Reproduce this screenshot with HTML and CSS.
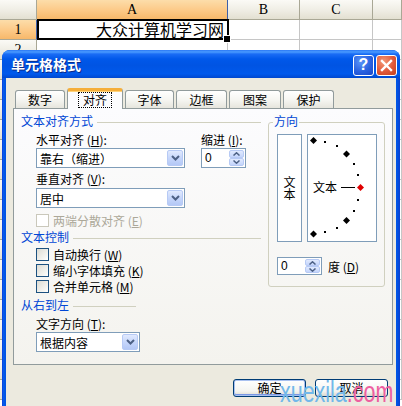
FILE: index.html
```html
<!DOCTYPE html>
<html>
<head>
<meta charset="utf-8">
<link rel="stylesheet" href="styles.css">
</head>
<body>
<div class="sheet">
  <div class="hrow">
    <div class="hd c0"></div>
    <div class="hd ca on">A</div>
    <div class="hd cb">B</div>
    <div class="hd cc">C</div>
    <div class="hd cd"></div>
  </div>
  <div class="row">
    <div class="hd c0 on">1</div>
    <div class="cell ca a1">大众计算机学习网</div>
    <div class="cell cb"></div>
    <div class="cell cc"></div>
    <div class="cell cd"></div>
  </div>
  <div class="row"><div class="hd c0">2</div><div class="cell ca"></div><div class="cell cb"></div><div class="cell cc"></div><div class="cell cd"></div></div>
  <div class="row"><div class="hd c0"></div><div class="cell ca"></div><div class="cell cb"></div><div class="cell cc"></div><div class="cell cd"></div></div>
  <div class="row"><div class="hd c0"></div><div class="cell ca"></div><div class="cell cb"></div><div class="cell cc"></div><div class="cell cd"></div></div>
  <div class="row"><div class="hd c0"></div><div class="cell ca"></div><div class="cell cb"></div><div class="cell cc"></div><div class="cell cd"></div></div>
  <div class="row"><div class="hd c0"></div><div class="cell ca"></div><div class="cell cb"></div><div class="cell cc"></div><div class="cell cd"></div></div>
  <div class="row"><div class="hd c0"></div><div class="cell ca"></div><div class="cell cb"></div><div class="cell cc"></div><div class="cell cd"></div></div>
  <div class="row"><div class="hd c0"></div><div class="cell ca"></div><div class="cell cb"></div><div class="cell cc"></div><div class="cell cd"></div></div>
  <div class="row"><div class="hd c0"></div><div class="cell ca"></div><div class="cell cb"></div><div class="cell cc"></div><div class="cell cd"></div></div>
  <div class="row"><div class="hd c0"></div><div class="cell ca"></div><div class="cell cb"></div><div class="cell cc"></div><div class="cell cd"></div></div>
  <div class="row"><div class="hd c0"></div><div class="cell ca"></div><div class="cell cb"></div><div class="cell cc"></div><div class="cell cd"></div></div>
  <div class="row"><div class="hd c0"></div><div class="cell ca"></div><div class="cell cb"></div><div class="cell cc"></div><div class="cell cd"></div></div>
  <div class="row"><div class="hd c0"></div><div class="cell ca"></div><div class="cell cb"></div><div class="cell cc"></div><div class="cell cd"></div></div>
  <div class="row"><div class="hd c0"></div><div class="cell ca"></div><div class="cell cb"></div><div class="cell cc"></div><div class="cell cd"></div></div>
  <div class="row"><div class="hd c0"></div><div class="cell ca"></div><div class="cell cb"></div><div class="cell cc"></div><div class="cell cd"></div></div>
  <div class="row"><div class="hd c0"></div><div class="cell ca"></div><div class="cell cb"></div><div class="cell cc"></div><div class="cell cd"></div></div>
  <div class="row"><div class="hd c0"></div><div class="cell ca"></div><div class="cell cb"></div><div class="cell cc"></div><div class="cell cd"></div></div>
  <div class="row"><div class="hd c0"></div><div class="cell ca"></div><div class="cell cb"></div><div class="cell cc"></div><div class="cell cd"></div></div>
  <div class="row"><div class="hd c0"></div><div class="cell ca"></div><div class="cell cb"></div><div class="cell cc"></div><div class="cell cd"></div></div>
</div>

<div class="dialog">
  <div class="titlebar">
    <span class="title">单元格格式</span>
    <div class="tbtn help">?</div>
    <div class="tbtn close">
      <svg width="13" height="13" viewBox="0 0 13 13"><path d="M2 2 L11 11 M11 2 L2 11" stroke="#fff" stroke-width="2.4" stroke-linecap="square"/></svg>
    </div>
  </div>
  <div class="body">
    <div class="tabs">
      <div class="tab w50">数字</div>
      <div class="tab active"><span class="focus">对齐</span></div>
      <div class="tab w49">字体</div>
      <div class="tab w51">边框</div>
      <div class="tab w52">图案</div>
      <div class="tab w51">保护</div>
    </div>
    <div class="panel">
      <div class="left">
        <div class="legend l1"><span>文本对齐方式</span><i class="rule"></i></div>
        <div class="lblrow">
          <div class="lbl lw">水平对齐 (<u>H</u>):</div>
          <div class="lbl">缩进 (<u>I</u>):</div>
        </div>
        <div class="ctlrow">
          <div class="select sw1"><span>靠右（缩进）</span>
            <b class="drop"><svg width="9" height="6" viewBox="0 0 9 6"><path d="M1 1 L4.5 4.5 L8 1" fill="none" stroke="#4D6185" stroke-width="2"/></svg></b>
          </div>
          <div class="spin sp1"><span>0</span>
            <b class="spinbtn">
              <i><svg width="7" height="4" viewBox="0 0 7 4"><path d="M0.5 3.5 L3.5 0.8 L6.5 3.5" fill="none" stroke="#4D6185" stroke-width="1.5"/></svg></i>
              <i><svg width="7" height="4" viewBox="0 0 7 4"><path d="M0.5 0.5 L3.5 3.2 L6.5 0.5" fill="none" stroke="#4D6185" stroke-width="1.5"/></svg></i>
            </b>
          </div>
        </div>
        <div class="lbl ind l2">垂直对齐 (<u>V</u>):</div>
        <div class="ctlrow c2">
          <div class="select sw1"><span>居中</span>
            <b class="drop"><svg width="9" height="6" viewBox="0 0 9 6"><path d="M1 1 L4.5 4.5 L8 1" fill="none" stroke="#4D6185" stroke-width="2"/></svg></b>
          </div>
        </div>
        <div class="cbrow dis d1"><i class="box"></i><span>两端分散对齐 (<u>E</u>)</span></div>
        <div class="legend l3"><span>文本控制</span><i class="rule"></i></div>
        <div class="cbrow c1"><i class="box"></i><span>自动换行 (<u>W</u>)</span></div>
        <div class="cbrow"><i class="box"></i><span>缩小字体填充 (<u>K</u>)</span></div>
        <div class="cbrow"><i class="box"></i><span>合并单元格 (<u>M</u>)</span></div>
        <div class="legend l4"><span>从右到左</span><i class="rule short"></i></div>
        <div class="lbl ind l5">文字方向 (<u>T</u>):</div>
        <div class="ctlrow c2">
          <div class="select sw3"><span>根据内容</span>
            <b class="drop"><svg width="9" height="6" viewBox="0 0 9 6"><path d="M1 1 L4.5 4.5 L8 1" fill="none" stroke="#4D6185" stroke-width="2"/></svg></b>
          </div>
        </div>
      </div>
      <div class="group">
        <span class="gl">方向</span>
        <div class="orient">
          <div class="vbox"><span>文</span><span>本</span></div>
          <div class="dial">
            <svg class="dialsvg" width="68" height="106" viewBox="0 0 68 106">
              <g fill="#000">
                <path d="M5.5 2 L9 5.5 L5.5 9 L2 5.5Z"/>
                <rect x="16" y="6" width="2" height="2"/>
                <rect x="28" y="10" width="2" height="2"/>
                <path d="M38.5 15.5 L42 19 L38.5 22.5 L35 19Z"/>
                <rect x="45" y="28" width="2" height="2"/>
                <rect x="49" y="39" width="2" height="2"/>
                <rect x="49" y="64" width="2" height="2"/>
                <rect x="45" y="75" width="2" height="2"/>
                <path d="M38.5 82 L42 85.5 L38.5 89 L35 85.5Z"/>
                <rect x="28" y="92" width="2" height="2"/>
                <rect x="16" y="96" width="2" height="2"/>
                <path d="M5.5 95.5 L9 99 L5.5 102.5 L2 99Z"/>
              </g>
              <path d="M52.5 49 L56 52.5 L52.5 56 L49 52.5Z" fill="#E00000"/>
              <rect x="33" y="52" width="14" height="1" fill="#000"/>
            </svg>
            <span class="dtext">文本</span>
          </div>
        </div>
        <div class="degrow">
          <div class="spin sp2"><span>0</span>
            <b class="spinbtn">
              <i><svg width="7" height="4" viewBox="0 0 7 4"><path d="M0.5 3.5 L3.5 0.8 L6.5 3.5" fill="none" stroke="#4D6185" stroke-width="1.5"/></svg></i>
              <i><svg width="7" height="4" viewBox="0 0 7 4"><path d="M0.5 0.5 L3.5 3.2 L6.5 0.5" fill="none" stroke="#4D6185" stroke-width="1.5"/></svg></i>
            </b>
          </div>
          <span class="deg">度 (<u>D</u>)</span>
        </div>
      </div>
    </div>
    <div class="btns">
      <div class="btn def">确定</div>
      <div class="btn">取消</div>
    </div>
  </div>
</div>

<div class="watermark"><span class="wb">xuexila</span><span class="wp">.com</span></div>
</body>
</html>
```

FILE: styles.css
```css
* { box-sizing: border-box; margin: 0; padding: 0; }
html, body { width: 402px; height: 406px; overflow: hidden; }
body {
  position: relative;
  background: #fff;
  font-family: "Noto Sans CJK SC", "Liberation Sans", sans-serif;
  font-size: 12px;
  color: #000;
}
u { text-decoration: underline; text-underline-offset: 1px; }

/* ---------- spreadsheet ---------- */
.sheet { display: flex; flex-direction: column; }
.hrow, .row { display: flex; height: 20px; flex: none; }
.c0 { width: 37px; flex: none; }
.ca { width: 191px; flex: none; }
.cb { width: 72px; flex: none; }
.cc { width: 73px; flex: none; }
.cd { flex: 1; }
.hd {
  background: linear-gradient(#FBFAF6, #EFEDE4 55%, #E3E0D1);
  border-right: 1px solid #A9A795;
  border-bottom: 1px solid #A9A795;
  display: flex; align-items: center; justify-content: center;
  font-family: "Liberation Serif", serif;
  font-size: 14px; line-height: 1;
}
.hd.on { background: linear-gradient(#FCDDAA, #FCC987 55%, #F7B86A); }
.hrow .hd.on { border-right-color: #3D5FA8; border-bottom-color: #3D5FA8; }
.row .hd.on { border-right-color: #3D5FA8; }
.cell { background: #fff; border-right: 1px solid #C6C6C6; border-bottom: 1px solid #C6C6C6; }
.a1 {
  position: relative;
  text-align: right;
  font-size: 16px;
  line-height: 19px;
  padding-right: 3px;
}
.a1::after {
  content: ""; position: absolute;
  left: 0; top: -1px; right: -2px; bottom: -1px;
  border: 2px solid #000;
}
.a1::before {
  content: ""; position: absolute; z-index: 2;
  right: -4px; bottom: -4px; width: 6px; height: 6px;
  background: #000; border: 1px solid #fff;
}

/* ---------- dialog ---------- */
.dialog {
  position: absolute; left: 2px; top: 50px;
  width: 398px; height: 370px;
  background: linear-gradient(90deg, #0831D9 0, #0A5CEB 1px, #0055E5 3px, #0055E5 calc(100% - 3px), #0A3ECF 100%);
  border-radius: 8px 8px 0 0;
  display: flex; flex-direction: column;
  overflow: hidden;
}
.titlebar {
  height: 28px; flex: none;
  display: flex; align-items: center; gap: 2px;
  padding: 0 3px 0 9px;
  background: linear-gradient(#2A78F5 0, #4A9BFF 2px, #1A6CF5 4px, #0058EA 9px, #0054E3 55%, #0059EC 85%, #0048CF 100%);
}
.title {
  flex: 1; color: #fff; font-weight: bold; font-size: 14px;
  text-shadow: 1px 1px 0 #0A2A8A; letter-spacing: 0;
}
.tbtn {
  width: 21px; height: 21px; border: 1px solid #fff; border-radius: 3px;
  display: flex; align-items: center; justify-content: center;
  margin-top: 2px;
}
.help {
  background: radial-gradient(circle at 35% 30%, #5A94F8, #2A62E0 55%, #1A47C8);
  color: #fff; font: bold 16px "Liberation Sans", sans-serif;
}
.close { background: radial-gradient(circle at 35% 30%, #F49A78, #E0583A 55%, #C2401E); }

.body {
  flex: 1; margin: 0 4px;
  background: #ECEADF;
  padding-top: 10px;
}

/* tabs */
.tabs {
  display: flex; align-items: flex-end; gap: 2px;
  height: 20px; margin-left: 9px;
  position: relative; z-index: 1;
}
.tab {
  height: 18px;
  border: 1px solid #919B9C; border-bottom: none;
  border-radius: 3px 3px 0 0;
  background: linear-gradient(#FFFFFF, #F6F6F2 50%, #E6E5DD);
  text-align: center; line-height: 17px;
}
.w49 { width: 49px; } .w50 { width: 50px; } .w51 { width: 51px; } .w52 { width: 52px; }
.tab.active {
  width: 56px; height: 21px; margin-bottom: -1px;
  background: #FCFCFE;
  border-top: 3px solid #F5AE3A;
  box-shadow: inset 0 1px 0 #FFD37A;
  padding-top: 1px;
  line-height: 15px;
}
.focus { display: inline-block; outline: 1px dotted #000; padding: 0 4px; line-height: 14px; }

/* panel */
.panel {
  margin-left: 7px; width: 380px; height: 257px;
  border: 1px solid #919B9C;
  background: linear-gradient(#FCFCFE, #F4F3EE);
  display: flex; align-items: flex-start;
}
.left { width: 254px; flex: none; padding-left: 7px; display: flex; flex-direction: column; }
.legend { display: flex; align-items: center; height: 13px; line-height: 13px; color: #0046D5; }
.legend .rule { flex: 1; height: 1px; background: #D0D0BF; margin: 3px 7px 0 4px; }
.legend .rule.short { flex: none; width: 63px; }
.l1 { margin-top: 5px; }
.l3 { margin-top: 3px; }
.l4 { margin-top: 4px; }
.lbl { height: 13px; line-height: 13px; white-space: nowrap; }
.lblrow { display: flex; margin-top: 6px; padding-left: 15px; }
.lw { width: 165px; }
.ind { padding-left: 15px; }
.l2 { margin-top: 4px; }
.l5 { margin-top: 6px; }
.ctlrow { display: flex; gap: 16px; margin-top: 2px; padding-left: 15px; }
.ctlrow.c2 { margin-top: 3px; }
.l5 + .ctlrow.c2 { margin-top: 2px; }

.select {
  height: 20px; border: 1px solid #7F9DB9; background: #fff;
  display: flex; align-items: center; padding-left: 3px;
}
.sw1 { width: 149px; }
.sw3 { width: 104px; }
.drop {
  margin-left: auto; margin-right: 1px;
  width: 16px; height: 16px; border-radius: 2px;
  border: 1px solid #B7CAF5;
  background: linear-gradient(#E1EAFE, #C7D7FB 50%, #B4C8F6);
  display: flex; align-items: center; justify-content: center;
}
.spin {
  height: 20px; border: 1px solid #7F9DB9; background: #fff;
  display: flex; align-items: center; padding-left: 3px;
  font-family: "Liberation Sans", sans-serif;
}
.sp1 { width: 45px; }
.spinbtn {
  margin-left: auto; margin-right: 1px;
  width: 15px; height: 16px;
  display: flex; flex-direction: column; gap: 0;
}
.spinbtn i {
  flex: 1; border: 1px solid #B7CAF5; border-radius: 2px;
  background: linear-gradient(#E1EAFE, #C3D4FB);
  display: flex; align-items: center; justify-content: center;
}

.cbrow { display: flex; align-items: center; gap: 4px; height: 16px; padding-left: 15px; white-space: nowrap; }
.cbrow .box {
  width: 13px; height: 13px; flex: none;
  border: 1px solid #1C5180;
  background: linear-gradient(135deg, #DCDBD3, #F4F4F0 70%, #FFFFFF);
}
.cbrow.dis { color: #ACA899; height: 14px; }
.cbrow.dis .box { border-color: #CAC8BB; background: #FFFFFF; }
.d1 { margin-top: 5px; }
.c1 { margin-top: 3px; }

/* orientation group */
.group {
  position: relative; flex: none;
  width: 117px; height: 165px;
  margin-top: 13px;
  border: 1px solid #D0D0BF; border-radius: 3px;
  padding: 11px 0 0 8px;
}
.gl {
  position: absolute; left: 4px; top: -9px;
  padding: 0 1px; line-height: 13px;
  color: #0046D5; background: #FBFBFA;
}
.orient { display: flex; gap: 5px; }
.vbox {
  width: 25px; height: 108px; border: 1px solid #7F9DB9; background: #fff;
  display: flex; flex-direction: column; align-items: center; justify-content: center;
  line-height: 12px;
}
.dial {
  position: relative;
  width: 70px; height: 108px; border: 1px solid #7F9DB9; background: #fff;
}
.dialsvg { display: block; }
.dtext { position: absolute; left: 5px; top: 46px; line-height: 12px; }
.degrow { display: flex; align-items: center; margin-top: 15px; }
.sp2 { width: 45px; height: 18px; }
.sp2 .spinbtn { height: 14px; }
.deg { margin-left: 6px; }

/* buttons */
.btns {
  display: flex; justify-content: flex-end; gap: 9px;
  margin-top: 14px; padding-right: 8px;
}
.btn {
  width: 73px; height: 18px;
  border: 1px solid #003C74; border-radius: 3px;
  background: linear-gradient(#FFFFFF, #F4F4F0 70%, #DCD8CC);
  text-align: center; line-height: 16px;
}
.btn.def { box-shadow: inset 0 0 0 1px #A9C1F0, inset 0 -1px 0 1px #7A97E4; }

/* watermark */
.watermark {
  position: absolute; left: 280px; top: 378px;
  font-family: "Liberation Sans", sans-serif;
  font-size: 29px; line-height: 29px;
  transform: scaleX(0.74); transform-origin: 0 0;
  white-space: nowrap;
}
.wb { color: #72B8EA; }
.wp { color: #EE5FA0; }
```
